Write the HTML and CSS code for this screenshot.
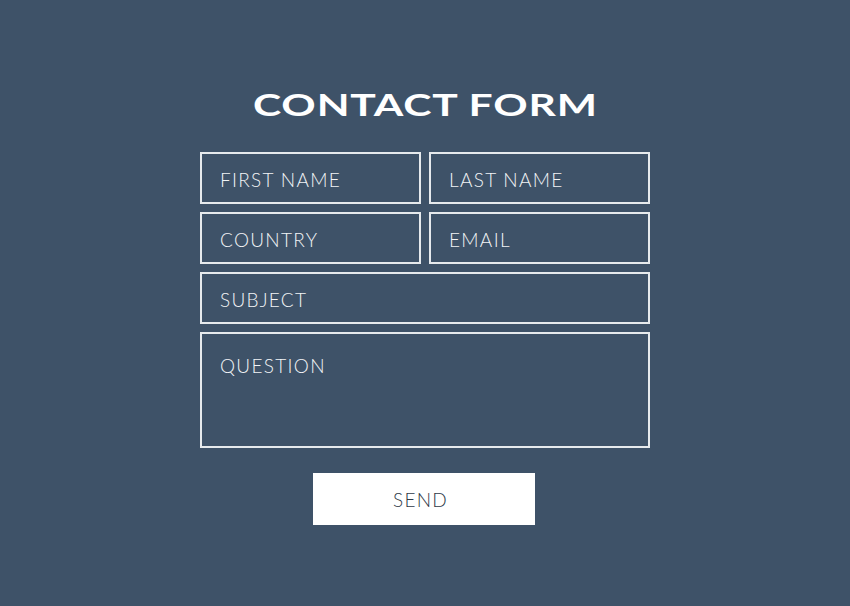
FILE: index.html
```html
<!DOCTYPE html>
<html>
<head>
<meta charset="utf-8">
<link rel="stylesheet" href="styles.css">
</head>
<body>
<main class="page">
  <h1 class="title">CONTACT FORM</h1>
  <form class="form">
    <div class="row">
      <div class="field">FIRST NAME</div>
      <div class="field">LAST NAME</div>
    </div>
    <div class="row">
      <div class="field">COUNTRY</div>
      <div class="field">EMAIL</div>
    </div>
    <div class="field">SUBJECT</div>
    <div class="field field-area">QUESTION</div>
    <div class="actions">
      <div class="send">SEND</div>
    </div>
  </form>
</main>
</body>
</html>
```

FILE: styles.css
```css
html, body {
  margin: 0;
  padding: 0;
}
body {
  background: #3e5268;
  width: 850px;
  height: 606px;
  overflow: hidden;
  font-family: "Lato", "Liberation Sans", sans-serif;
}
.page {
  display: flex;
  flex-direction: column;
  align-items: center;
  padding-top: 86px;
}
.title {
  margin: 0 0 30px 0;
  font-size: 30px;
  line-height: 36px;
  font-weight: 700;
  color: #ffffff;
  letter-spacing: 0.6px;
  transform: scaleX(1.42);
  transform-origin: center;
}
.form {
  width: 450px;
  display: flex;
  flex-direction: column;
  gap: 8px;
}
.row {
  display: flex;
  gap: 8px;
}
.row .field {
  flex: 1;
}
.field {
  box-sizing: border-box;
  height: 52px;
  border: 2px solid #e6eaed;
  padding: 2px 18px 0 18px;
  display: flex;
  align-items: center;
  color: #f2f4f6;
  font-size: 19px;
  font-weight: 300;
  letter-spacing: 1.3px;
}
.field-area {
  height: 116px;
  align-items: flex-start;
  padding-top: 20px;
}
.actions {
  display: flex;
  justify-content: center;
  padding-top: 17px;
}
.send {
  box-sizing: border-box;
  width: 222px;
  height: 52px;
  background: #ffffff;
  color: #2e3a48;
  display: flex;
  align-items: center;
  justify-content: center;
  font-size: 19px;
  font-weight: 300;
  letter-spacing: 1.2px;
  padding-right: 7px;
  margin-left: -2px;
}
```
